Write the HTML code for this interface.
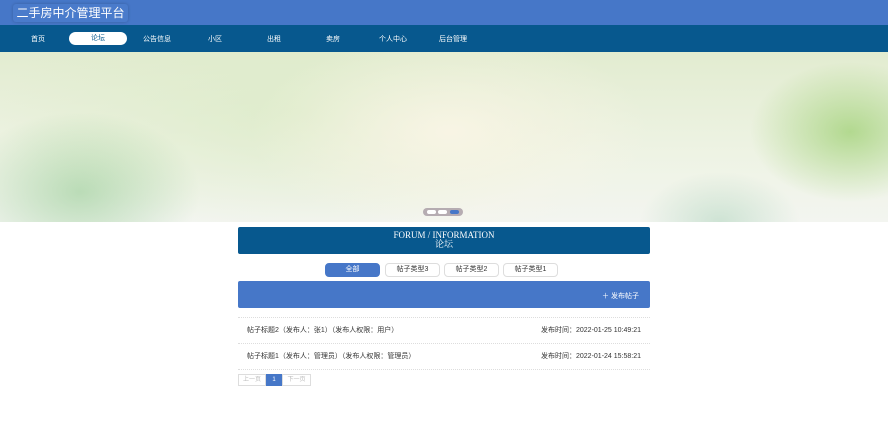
<!DOCTYPE html><html><head><meta charset="utf-8"><style>
*{margin:0;padding:0;box-sizing:border-box}
body{width:888px;height:427px;background:#fff;font-family:"Liberation Sans","Noto Sans CJK SC",sans-serif;position:relative;overflow:hidden}
.top{position:absolute;left:0;top:0;width:888px;height:25px;background:#4677c8}
.logo{position:absolute;left:13px;top:4px;width:115px;height:18px;border-radius:3px;background:#4a7bcb;box-shadow:0 0 3px rgba(0,0,0,.2);color:#fff;font-size:12px;line-height:18px;text-align:center}
.nav{position:absolute;left:0;top:25px;width:888px;height:27px;background:#07588e}
.nav span{position:absolute;top:9px;color:#fff;font-size:7px;transform:translateX(-50%)}
.nav .on{top:7px;width:58px;height:13px;background:#fff;color:#07588e;border-radius:7px;text-align:center;line-height:13px;left:98px}
.banner{position:absolute;left:0;top:52px;width:888px;height:170px;background:
radial-gradient(ellipse 120px 80px at 80px 140px,rgba(120,190,120,.45),transparent),
radial-gradient(ellipse 100px 70px at 850px 80px,rgba(140,200,90,.6),transparent),
radial-gradient(ellipse 80px 50px at 720px 170px,rgba(150,200,170,.4),transparent),
radial-gradient(ellipse 200px 100px at 450px 80px,rgba(250,245,230,.9),transparent),
radial-gradient(ellipse 300px 120px at 300px 60px,rgba(220,235,200,.8),transparent),
linear-gradient(180deg,#e2ecd0 0%,#eef3e4 60%,#f3f5f0 100%)}
.dots{position:absolute;left:423px;top:208px;width:40px;height:8px;border-radius:4px;background:rgba(120,100,120,.5)}
.dots i{position:absolute;top:2px;width:9px;height:4px;border-radius:2px;background:#fff}
.title{position:absolute;left:238px;top:227px;width:412px;height:27px;background:#07588e;color:#fff;text-align:center;font-family:"Liberation Serif","Noto Serif CJK SC",serif;font-size:9px;line-height:9px;padding-top:4px;border-radius:2px}
.tabs span{position:absolute;top:263px;width:55px;height:14px;border:1px solid #ddd;border-radius:4px;font-size:7px;text-align:center;line-height:12px;color:#333;background:#fff}
.tabs .a{background:#4677c8;color:#fff;border-color:#4677c8}
.bar{position:absolute;left:238px;top:281px;width:412px;height:27px;background:#4677c8;border-radius:2px;color:#fff;font-size:7px}
.row{position:absolute;left:238px;width:412px;height:26px;border-top:1px dotted #ddd;font-size:7px;color:#333;line-height:26px;padding:0 9px}
.row b{font-weight:normal;float:right}
.pg{position:absolute;top:374px;height:12px;border:1px solid #ddd;font-size:6px;color:#bbb;text-align:center;line-height:10px}
</style></head><body>
<div class="top"><div class="logo">二手房中介管理平台</div></div>
<div class="nav"><span style="left:38px">首页</span><span class="on" style="transform:translateX(-29px)">论坛</span><span style="left:157px">公告信息</span><span style="left:215px">小区</span><span style="left:274px">出租</span><span style="left:333px">卖房</span><span style="left:393px">个人中心</span><span style="left:453px">后台管理</span></div>
<div class="banner"></div>
<div class="dots"><i style="left:4px"></i><i style="left:15px"></i><i style="left:27px;background:#4677c8"></i></div>
<div class="title">FORUM / INFORMATION<br>论坛</div>
<div class="tabs"><span class="a" style="left:325px">全部</span><span style="left:385px">帖子类型3</span><span style="left:444px">帖子类型2</span><span style="left:503px">帖子类型1</span></div>
<div class="bar"><span style="position:absolute;right:11px;top:10px">＋ 发布帖子</span></div>
<div class="row" style="top:317px">帖子标题2（发布人：张1）（发布人权限：用户）<b>发布时间：2022-01-25 10:49:21</b></div>
<div class="row" style="top:343px">帖子标题1（发布人：管理员）（发布人权限：管理员）<b>发布时间：2022-01-24 15:58:21</b></div>
<div class="row" style="top:369px;height:1px"></div>
<div class="pg" style="left:238px;width:28px">上一页</div>
<div class="pg" style="left:266px;width:16px;background:#4677c8;color:#fff;border-color:#4677c8">1</div>
<div class="pg" style="left:282px;width:29px">下一页</div>
</body></html>
